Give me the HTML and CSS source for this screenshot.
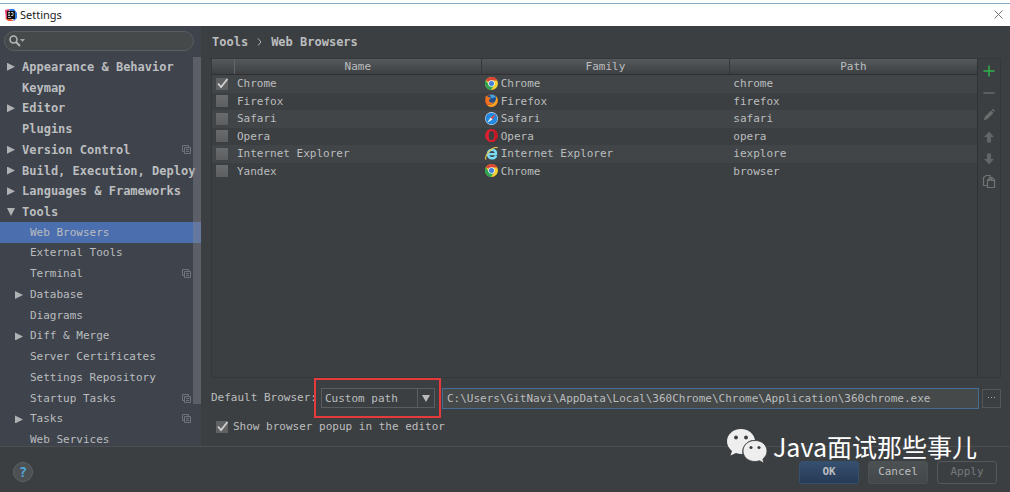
FILE: index.html
```html
<!DOCTYPE html>
<html lang="en">
<head>
<meta charset="utf-8">
<title>Settings</title>
<link rel="stylesheet" href="styles.css">
</head>
<body>
<svg class="defs" aria-hidden="true">
  <defs>
    <symbol id="chrome" viewBox="1 1 14 14">
      <circle cx="8" cy="8" r="7" fill="#f5cf2f"/>
      <path d="M8 8 1.9 4.5A7 7 0 0 1 14.2 4.8H8z" fill="#dc4434"/>
      <path d="M1.9 4.5A7 7 0 0 0 7.4 15L10.8 9.5 8 8 5.2 9.6z" fill="#2fa352"/>
      <circle cx="8" cy="8" r="3.5" fill="#f3f3f3"/>
      <circle cx="8" cy="8" r="2.7" fill="#3f7fd8"/>
    </symbol>
    <symbol id="firefox" viewBox="1 1 14 14">
      <circle cx="8" cy="8" r="7" fill="#dd5a1c"/>
      <circle cx="8.300" cy="6.700" r="5.500" fill="#1f4f8f"/>
      <path d="M6 2.200c3-1.200 6.200 0 7.200 3.200-1.600-1-3.700-.6-4.700.700z" fill="#4aa4dc"/>
      <path d="M1.400 4.200 2.600 2.500l1 1.600 2.600.500 1 1.600-2 1.200c.300 2.700 3.200 3.500 5.600 2.200C9.800 12.600 5 13 2.800 11z" fill="#ee7420"/>
      <path d="M13.200 3.500c2.600 3.900 1.500 9-3 10.900-3 1-6 0-7.600-2.400 4 2.300 10 .5 10.600-8.500z" fill="#f5a623"/>
    </symbol>
    <symbol id="safari" viewBox="1 1 14 14">
      <circle cx="8" cy="8" r="7" fill="#c9dcee"/>
      <circle cx="8" cy="8" r="6.300" fill="#2289e2"/>
      <path d="M12.500 3.500 9 9 7 7z" fill="#e5483e"/>
      <path d="M3.500 12.500 7 7l2 2z" fill="#f4f4f4"/>
    </symbol>
    <symbol id="opera" viewBox="1 1 14 14">
      <path fill-rule="evenodd" d="M8 1a6.800 7 0 1 0 .01 0zM8 2.800c2 0 3 2.300 3 5.200s-1 5.200-3 5.200S5 10.900 5 8s1-5.200 3-5.200z" fill="#e0202e"/>
      <path d="M8 1c4 0 6.800 3 6.800 7S12 15 8 15c4-1.500 4.500-5 3-7 1-3-1-6-3-7z" fill="#a70f1d" opacity=".5"/>
    </symbol>
    <symbol id="ie" viewBox="1 1 14 14">
      <path d="M13 10.300C12 12.500 10.500 13.200 8.700 13.200 5.900 13.200 4.200 11.200 4.200 8.500 4.200 5.700 6.100 3.900 8.700 3.900c2.700 0 4.300 1.900 4.200 4.800H5" fill="none" stroke="#7adcf8" stroke-width="2.600"/>
      <path d="M2.300 14.500C.2 13 3.500 6.500 8 3.500c3-2.200 6-2.800 6.300-1.200" fill="none" stroke="#edc64a" stroke-width="1.200"/>
    </symbol>
    <symbol id="copy" viewBox="0 0 10 10">
      <path d="M2.500 6.500h-2v-6h6v2M2.500 2.500h6v6h-6zM4 4.500h3M4 6.500h3" fill="none" stroke="#6f747a"/>
    </symbol>
  </defs>
</svg>
<div class="window">
  <header class="titlebar">
    <svg class="app-icon" viewBox="0 0 12 12" aria-hidden="true">
      <path d="M0 1 4 0 5 6 1 11z" fill="#e83a6f"/><path d="M4 0h5l3 4v5l-3 3z" fill="#3478e8"/><path d="M0 9 3 8l6 4H3z" fill="#f0603c"/>
      <path d="M2 2h8v8H2z" fill="#111"/><path d="M3 3.500h2M4 3.500v3M3 6.500h2M6 3.500h2v3H6M3 8.500h3" stroke="#ddd" stroke-width=".8" fill="none"/>
    </svg>
    <h1 class="title">Settings</h1>
    <button class="close" aria-label="Close"><svg viewBox="0 0 9 9"><path d="m.5.5 8 8M8.500.5l-8 8" stroke="#777" fill="none"/></svg></button>
  </header>
  <div class="body">
    <nav class="sidebar" aria-label="Settings categories">
      <div class="search">
        <svg viewBox="0 0 16 12" aria-hidden="true"><circle cx="4.500" cy="4.500" r="3.500" fill="none" stroke="#b4b6b7" stroke-width="1.500"/><path d="m7 7 4 4" stroke="#b4b6b7" stroke-width="2"/><path d="M11 4h5l-2.500 3z" fill="#a0a3a4"/></svg>
        <input type="text" aria-label="Search settings">
      </div>
      <div class="tree-area">
        <ul class="tree">
          <li class="root closed"><a href="#">Appearance &amp; Behavior</a></li>
          <li class="root"><a href="#">Keymap</a></li>
          <li class="root closed"><a href="#">Editor</a></li>
          <li class="root"><a href="#">Plugins</a></li>
          <li class="root closed"><a href="#">Version Control</a><svg class="copy"><use href="#copy"/></svg></li>
          <li class="root closed"><a href="#">Build, Execution, Deploy</a></li>
          <li class="root closed"><a href="#">Languages &amp; Frameworks</a></li>
          <li class="root open"><a href="#">Tools</a></li>
          <li class="selected"><a href="#" aria-current="page">Web Browsers</a></li>
          <li><a href="#">External Tools</a></li>
          <li><a href="#">Terminal</a><svg class="copy"><use href="#copy"/></svg></li>
          <li class="closed"><a href="#">Database</a></li>
          <li><a href="#">Diagrams</a></li>
          <li class="closed"><a href="#">Diff &amp; Merge</a></li>
          <li><a href="#">Server Certificates</a></li>
          <li><a href="#">Settings Repository</a></li>
          <li><a href="#">Startup Tasks</a><svg class="copy"><use href="#copy"/></svg></li>
          <li class="closed"><a href="#">Tasks</a><svg class="copy"><use href="#copy"/></svg></li>
          <li><a href="#">Web Services</a></li>
        </ul>
        <div class="scroll-thumb"></div>
      </div>
    </nav>
    <main class="content">
      <h2 class="crumbs"><span>Tools</span><svg viewBox="0 0 5 8" aria-hidden="true"><path d="m1 .5 3 3.500-3 3.500" fill="none" stroke="#b4b6b8"/></svg><span>Web Browsers</span></h2>
      <div class="panel">
        <div class="table-wrap">
          <table class="browsers">
            <colgroup><col class="col-check"><col><col><col></colgroup>
            <thead><tr><th></th><th>Name</th><th>Family</th><th>Path</th></tr></thead>
            <tbody>
              <tr><td><input type="checkbox" aria-label="Enable Chrome" checked></td><td>Chrome</td><td><svg class="logo"><use href="#chrome"/></svg>Chrome</td><td>chrome</td></tr>
              <tr><td><input type="checkbox" aria-label="Enable Firefox"></td><td>Firefox</td><td><svg class="logo"><use href="#firefox"/></svg>Firefox</td><td>firefox</td></tr>
              <tr><td><input type="checkbox" aria-label="Enable Safari"></td><td>Safari</td><td><svg class="logo"><use href="#safari"/></svg>Safari</td><td>safari</td></tr>
              <tr><td><input type="checkbox" aria-label="Enable Opera"></td><td>Opera</td><td><svg class="logo"><use href="#opera"/></svg>Opera</td><td>opera</td></tr>
              <tr><td><input type="checkbox" aria-label="Enable Internet Explorer"></td><td>Internet Explorer</td><td><svg class="logo"><use href="#ie"/></svg>Internet Explorer</td><td>iexplore</td></tr>
              <tr><td><input type="checkbox" aria-label="Enable Yandex"></td><td>Yandex</td><td><svg class="logo"><use href="#chrome"/></svg>Chrome</td><td>browser</td></tr>
            </tbody>
          </table>
        </div>
        <div class="toolbar">
          <button aria-label="Add"><svg viewBox="0 0 14 14"><path d="M7 1.500v11M1.500 7h11" stroke="#2fb34b" stroke-width="1.500"/></svg></button>
          <button aria-label="Remove"><svg viewBox="0 0 14 14"><path d="M1.500 7h11" stroke="#67696a" stroke-width="1.500"/></svg></button>
          <button aria-label="Edit"><svg viewBox="0 0 14 14"><path d="m1.500 12.500 1.500-4L9 2.500l2.500 2.500-6 6zM9.700 1.800l1-.8c1 0 2 1 2 2l-.7 1z" fill="#696b6c"/></svg></button>
          <button aria-label="Move up"><svg viewBox="0 0 14 14"><path d="m7 1.500 5 5.500H9v5.500H5V7H2z" fill="#626566"/></svg></button>
          <button aria-label="Move down"><svg viewBox="0 0 14 14"><path d="m7 12.500 5-5.500H9V1.500H5V7H2z" fill="#626566"/></svg></button>
          <button aria-label="Duplicate"><svg viewBox="0 0 14 14"><path d="M5 11.500H1.500v-8L4 1.500h4v2M5.500 6l2.500-2.500h2l2.500 2.500v7.500h-7zM9.500 3.500v3h3M5.500 6.500h2.500V3.500" fill="none" stroke="#707273" stroke-width="1.200"/></svg></button>
        </div>
      </div>
      <div class="default-row">
        <label for="default-browser">Default Browser:</label>
        <div class="highlight"><select id="default-browser"><option>Custom path</option></select></div>
        <div class="path-field"><input type="text" aria-label="Browser path" value="C:\Users\GitNavi\AppData\Local\360Chrome\Chrome\Application\360chrome.exe"></div>
        <button class="browse" aria-label="Browse"><svg viewBox="0 0 9 2" aria-hidden="true"><path d="M1 .5h1M4 .5h1M7 .5h1" stroke="#a5a7a8"/></svg></button>
      </div>
      <label class="popup"><input type="checkbox" checked>Show browser popup in the editor</label>
    </main>
  </div>
  <footer class="footer">
    <button class="help" aria-label="Help">?</button>
    <button class="btn primary">OK</button>
    <button class="btn">Cancel</button>
    <button class="btn disabled" disabled>Apply</button>
  </footer>
  <div class="watermark">
    <svg viewBox="0 0 40 34" aria-hidden="true">
      <path d="M14 0C6 0 0 5.500 0 12.500c0 4 2 7 5 9.500l-1.500 4.500L9 24c2 .7 4 1 6.500.9C14 17 21 10.500 28 11 27 4.500 21 0 14 0z" fill="#eee"/>
      <path d="M28 11.500c-7 0-12 4.800-12 10.500s5 10.500 12 10.500c1.500 0 3-.3 4.500-.8l4.500 2.300-1.200-4C38.500 28 40 25 40 22c0-5.700-5-10.500-12-10.500z" fill="#eee" stroke="#3c3f41" stroke-width=".8"/>
      <g fill="#3c3f41"><circle cx="9" cy="8.500" r="1.900"/><circle cx="19" cy="8.500" r="1.900"/><circle cx="24" cy="18.500" r="1.600"/><circle cx="32" cy="18.500" r="1.600"/></g>
    </svg>
    <span>Java面试那些事儿</span>
  </div>
</div>
</body>
</html>
```
FILE: styles.css
```css
* { box-sizing: border-box; }

body {
  margin: 0;
  background: #3c3f41;
  color: #bbbdbf;
  font: 11px/16px "DejaVu Sans Mono", monospace;
}

button, input, select { font: inherit; color: inherit; margin: 0; }
button { padding: 0; border: 0; background: none; }
a { color: inherit; text-decoration: none; }
.defs { position: absolute; width: 0; height: 0; }

.window {
  position: relative;
  display: flex;
  flex-direction: column;
  height: 100vh;
  overflow: hidden;
}

/* Title bar */
.titlebar {
  display: flex;
  align-items: center;
  flex: none;
  height: 26px;
  padding: 3px 7px 0 5px;
  gap: 3px;
  background: linear-gradient(#fff 3px, #86aac4 3px, #86aac4 4px, #fff 4px);
  color: #222;
}
.app-icon { width: 12px; height: 12px; }
.title { margin: 0; font: 11px/16px "Noto Sans", sans-serif; }
.close { display: flex; margin-left: auto; }
.close svg { width: 9px; height: 9px; }

.body { display: flex; flex: 1; min-height: 0; }

/* Category tree */
.sidebar {
  display: flex;
  flex-direction: column;
  flex: none;
  width: 201px;
  padding-top: 5px;
  background: #3e434c;
  overflow: hidden;
}
.search {
  display: flex;
  align-items: center;
  flex: none;
  height: 20px;
  margin: 0 7px 5px 4px;
  padding-left: 4px;
  border: 1px solid #5a5e61;
  border-radius: 10px;
  background: #45494a;
}
.search svg { flex: none; width: 16px; height: 12px; }
.search input { flex: 1; min-width: 0; border: 0; outline: 0; background: none; }
.tree-area { display: flex; flex: 1; position: relative; margin-bottom: -4px; }
.tree {
  display: grid;
  grid-auto-rows: 1fr;
  flex: 1;
  min-width: 0;
  margin: 0;
  padding: 0;
  list-style: none;
}
.tree li {
  display: flex;
  align-items: center;
  min-width: 0;
  padding: 1px 3px 0 15px;
  white-space: nowrap;
}
.tree li::before {
  content: "";
  flex: none;
  width: 8px;
  height: 8px;
  margin-right: 7px;
}
.tree .closed::before { background: #afb1b3; clip-path: polygon(0 0, 100% 50%, 0 100%); }
.tree .open::before { background: #afb1b3; clip-path: polygon(0 0, 100% 0, 50% 100%); }
.tree .root { padding-left: 7px; font-size: 12px; font-weight: bold; }
.tree a { flex: 1; min-width: 0; }
.tree .selected { background: #4b6eaf; }
.copy { flex: none; width: 10px; height: 10px; margin-right: 6px; }
.scroll-thumb {
  position: absolute;
  top: 1px;
  right: 0;
  bottom: 46px;
  width: 8px;
  background: rgba(130, 130, 140, 0.45);
}

/* Page */
.content {
  display: flex;
  flex-direction: column;
  flex: 1;
  min-width: 0;
  padding: 8px 9px 11px 10px;
}
.crumbs {
  display: flex;
  align-items: center;
  gap: 9px;
  margin: 0 0 8px 1px;
  font-size: 12px;
  line-height: 16px;
}
.crumbs svg { width: 5px; height: 8px; }

.panel {
  display: flex;
  flex: 1;
  min-height: 0;
  border: 1px solid #35383a;
}
.table-wrap { flex: 1; border-right: 1px solid #2f3234; }
.browsers { width: 100%; table-layout: fixed; border-collapse: collapse; }
.col-check { width: 22px; }
.browsers th {
  height: 15px;
  padding: 1px 0 0;
  border-right: 1px solid #35383a;
  border-bottom: 1px solid #2e3133;
  background: linear-gradient(#55595c, #3d4042);
  font-weight: normal;
  line-height: 14px;
}
.browsers th:first-child { border-right-color: #63676a; }
.browsers th:last-child { border-right: 0; }
.browsers td { height: 18px; padding: 1px 3px 0; line-height: 16px; white-space: nowrap; }
.browsers td:first-child { padding: 0 4px; }
.browsers td:last-child { padding-left: 4px; }
.browsers tr:nth-child(even) td { height: 17px; }
.browsers tbody tr:nth-child(odd) { background: #414547; }
.browsers td > * { vertical-align: middle; }
.logo { width: 13px; height: 13px; margin: -2px 3px 0 0; }

input[type="checkbox"] {
  appearance: none;
  display: block;
  width: 12px;
  height: 12px;
  background: linear-gradient(#6a6b6c, #5d5e5f);
}
input[type="checkbox"]:checked {
  background: url("data:image/svg+xml,%3Csvg xmlns='http://www.w3.org/2000/svg' viewBox='0 0 12 12'%3E%3Cpath d='M2 5.500 5 9l6.500-8' fill='none' stroke='%23d0d0d0' stroke-width='1.800'/%3E%3C/svg%3E"), #606162;
}

.toolbar {
  display: flex;
  flex-direction: column;
  align-items: center;
  gap: 8px;
  width: 22px;
  padding-top: 5px;
}
.toolbar button, .toolbar svg { display: block; width: 14px; height: 14px; }

/* Default browser */
.default-row {
  display: flex;
  align-items: center;
  height: 20px;
  margin-top: 10px;
}
.default-row label { width: 110px; white-space: nowrap; }
.highlight { position: relative; width: 114px; }
.highlight::after {
  content: "";
  position: absolute;
  inset: -10px -6px -10px -7px;
  border: 2px solid #e5393b;
  pointer-events: none;
}
.highlight select {
  display: block;
  appearance: none;
  width: 100%;
  height: 20px;
  padding: 1px 20px 0 3px;
  border: 1px solid #5b5e60;
  border-radius: 0;
  background:
    url("data:image/svg+xml,%3Csvg xmlns='http://www.w3.org/2000/svg' viewBox='0 0 17 18'%3E%3Cpath d='M.5 0v18' stroke='%235b5e60'/%3E%3Cpath d='M5 6h8l-4 7z' fill='%23bbb'/%3E%3C/svg%3E") right / 17px 18px no-repeat,
    #3c3f41;
}
.path-field { flex: 1; margin: 0 3px 0 7px; }
.path-field input {
  display: block;
  width: 100%;
  height: 21px;
  padding: 0 4px;
  border: 1px solid #466d94;
  outline: 0;
  background: #45494a;
}
.browse {
  display: flex;
  align-items: center;
  justify-content: center;
  width: 19px;
  height: 19px;
  border: 1px solid #53575a;
}
.browse svg { width: 9px; height: 2px; }
.popup {
  display: flex;
  align-items: center;
  align-self: flex-start;
  gap: 5px;
  margin: 11px 0 0 5px;
}

/* Footer */
.footer {
  display: flex;
  align-items: center;
  gap: 9px;
  flex: none;
  height: 46px;
  padding: 5px 13px 0;
  border-top: 1px solid #4d5052;
}
.help {
  width: 20px;
  height: 20px;
  margin-right: auto;
  border: 1px solid #5d6265;
  border-radius: 50%;
  background: #4c5052;
  color: #4fa3d8;
  font-size: 14px;
  font-weight: bold;
  line-height: 18px;
}
.btn {
  width: 60px;
  height: 23px;
  border: 1px solid #4b5052;
  border-radius: 3px;
  background: linear-gradient(#4c5153, #434749);
}
.btn.primary {
  border-color: #35506e;
  background: linear-gradient(#36506f, #263a56);
  font-weight: bold;
}
.btn.disabled { border-color: #55585a; background: none; color: #75787a; }

/* Channel mark */
.watermark {
  position: absolute;
  right: 33px;
  bottom: 28px;
  display: flex;
  align-items: center;
  gap: 6px;
  color: #fff;
  font: 25px/36px "Noto Sans CJK SC", sans-serif;
  white-space: nowrap;
  pointer-events: none;
}
.watermark svg { width: 40px; height: 34px; }
```
